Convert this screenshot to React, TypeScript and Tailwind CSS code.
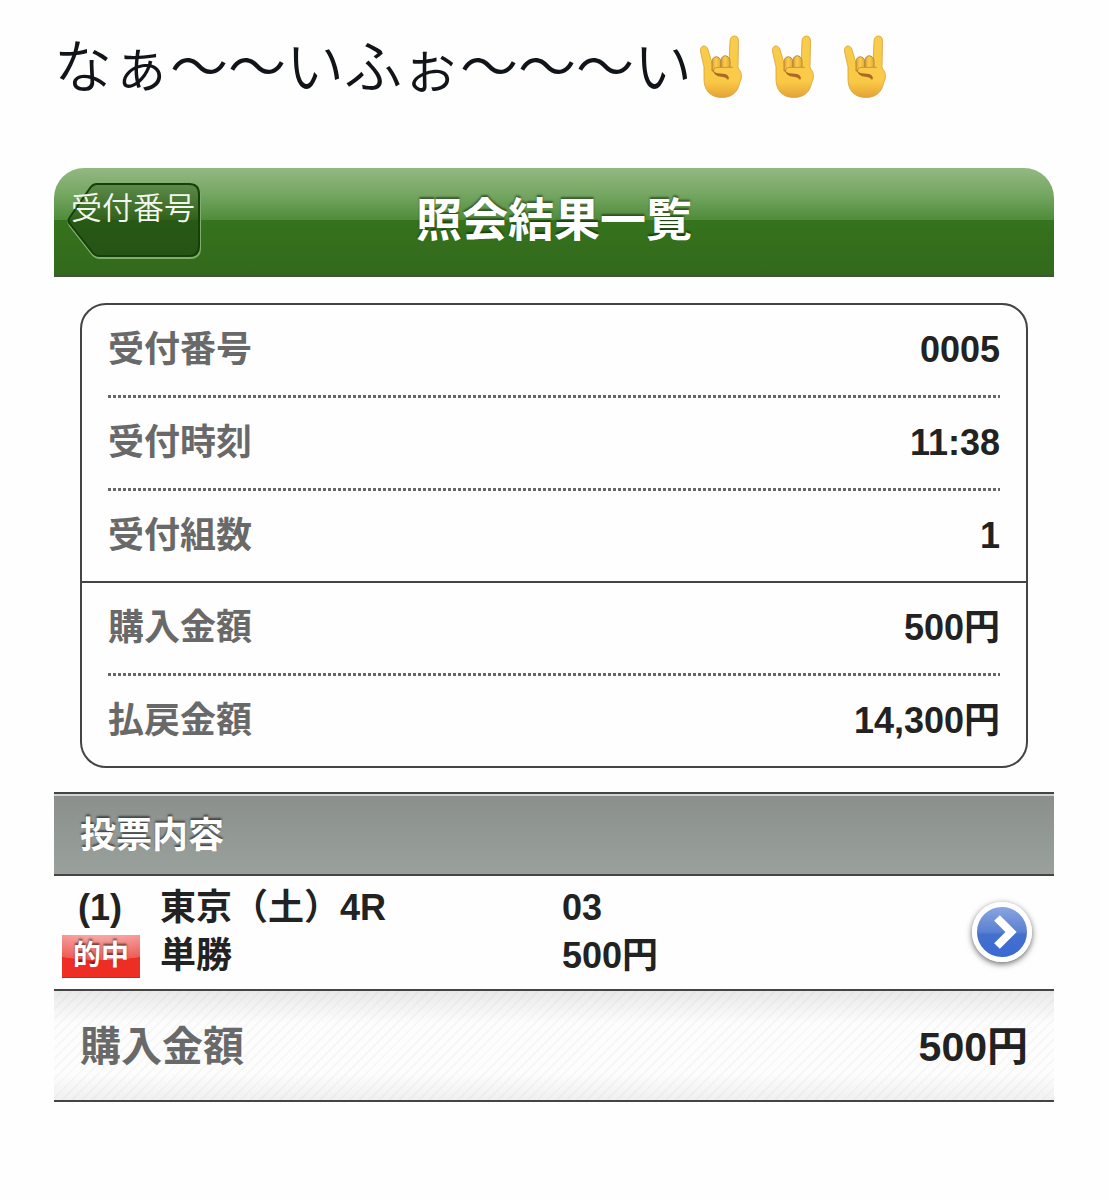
import type { ReactNode } from 'react';

const receipt = [
  { label: '受付番号', value: '0005' },
  { label: '受付時刻', value: '11:38' },
  { label: '受付組数', value: '1' },
];

const amounts = [
  { label: '購入金額', value: '500円' },
  { label: '払戻金額', value: '14,300円' },
];

function HornsHand() {
  return (
    <svg viewBox="0 0 72 68" className="h-[68px] w-[72px]" role="img" aria-label="🤘">
      <defs>
        <linearGradient id="skin" x1="0" y1="0" x2="0" y2="1">
          <stop offset="0" stopColor="#f8cd4c" />
          <stop offset="0.75" stopColor="#fac844" />
          <stop offset="1" stopColor="#e2a238" />
        </linearGradient>
        <linearGradient id="finger" x1="0" y1="0" x2="1" y2="0">
          <stop offset="0" stopColor="#dba136" />
          <stop offset="0.45" stopColor="#fbce50" />
          <stop offset="1" stopColor="#dfa83a" />
        </linearGradient>
      </defs>
      <path
        d="M12 33L8.500 17.500C7.500 11 14.500 10 16 15.500L20.500 31L37 34L38 6.500C38.500 0.500 46.500 0.500 46.500 6.500L46 34C50 38 50.500 44 47.500 49C46 58 40 63.500 30 63.500C18 63.500 12 56 12 45Z"
        fill="url(#skin)"
        stroke="#d99f38"
        strokeWidth="0.8"
      />
      <path d="M20 37V28C20 21 28.500 21 29 28V37Z" fill="url(#finger)" stroke="#b9822a" strokeWidth="0.9" />
      <path d="M29 36V27C29 20 37.500 20 38 27V36Z" fill="url(#finger)" stroke="#b9822a" strokeWidth="0.9" />
      <path d="M21 36C22 42 27 42.500 31 43C34 43.500 35 44.500 36 46C38.500 43 37 39 33 37Z" fill="#ab6a20" />
      <path
        d="M22.500 38C20.500 34.500 23 33.500 27 33.500H41C47 34 49.500 39 48 44C46 49 40 49 37 46C37.500 42 35 40 31 39.700C27 39.500 24 39.500 22.500 38Z"
        fill="#fbca4a"
      />
      <path d="M22 36C22 33.500 25 33.300 27 33.300H41" fill="none" stroke="#c98f30" strokeWidth="0.9" />
    </svg>
  );
}

function BackButton({ children }: { children: ReactNode }) {
  return (
    <button type="button" className="relative mb-[2px] h-[80px] w-[136px] justify-self-start text-left">
      <svg viewBox="0 0 136 80" className="absolute inset-0 h-full w-full" aria-hidden="true">
        <defs>
          <linearGradient id="back" x1="0" y1="0" x2="0" y2="1">
            <stop offset="0" stopColor="#5d8b4b" />
            <stop offset="0.5" stopColor="#316119" />
            <stop offset="0.5" stopColor="#285914" />
            <stop offset="1" stopColor="#265315" />
          </linearGradient>
        </defs>
        <path
          d="M29 4H124Q134 4 134 14V67Q134 77 124 77H34Q29 77 26 73L4 45Q1 41 4 37L24 8Q26 4 29 4Z"
          fill="none"
          stroke="#7fae6c"
          strokeWidth="2"
        />
        <path
          d="M31 3H123Q133 3 133 13V65Q133 75 123 75H34Q29 75 26 71L4 43Q1 40 4 36L24 7Q27 3 31 3Z"
          fill="url(#back)"
          stroke="#163f0a"
          strokeWidth="2"
        />
      </svg>
      <span className="relative block pb-[24px] pl-[5px] text-[31px] leading-[50px] font-[350] whitespace-nowrap text-[#f2f7ee]">
        {children}
      </span>
    </button>
  );
}

function Row({ label, value }: { label: string; value: string }) {
  return (
    <div className="flex h-[90px] items-center justify-between">
      <dt className="text-[#696969]">{label}</dt>
      <dd className="text-[#222]">{value}</dd>
    </div>
  );
}

function Dots() {
  return (
    <div
      aria-hidden="true"
      className="h-[3px] bg-[repeating-linear-gradient(90deg,#666_0_3px,transparent_3px_5px)]"
    />
  );
}

export default function App() {
  return (
    <main className="min-h-screen bg-[#fefefe] px-[54px] pt-[32px] font-['Liberation_Sans','Noto_Sans_CJK_JP',sans-serif]">

      <p className="flex h-[72px] items-center text-[58px] leading-[72px] font-[350] whitespace-nowrap text-[#111418]">
        <span>なぁ〜〜いふぉ〜〜〜い</span>
        <HornsHand />
        <HornsHand />
        <HornsHand />
      </p>

      <header className="mt-[64px] grid h-[109px] grid-cols-[1fr_auto_1fr] items-center rounded-t-[30px] border-b-2 border-[#48513f] bg-[linear-gradient(180deg,#92b982_0%,#74a661_25%,#4f8b39_49%,#35731d_49%,#33691c_100%)] px-[12px]">
        <BackButton>受付番号</BackButton>
        <h1 className="pb-[4px] text-[46px] leading-[60px] font-bold text-white [text-shadow:0_-2px_2px_#0007]">
          照会結果一覧
        </h1>
      </header>

      <dl className="mx-[26px] mt-[26px] rounded-[26px] border-2 border-[#444] text-[36px] leading-[48px] font-bold">
        <div className="px-[26px]">
          <Row {...receipt[0]} />
          <Dots />
          <Row {...receipt[1]} />
          <Dots />
          <Row {...receipt[2]} />
        </div>
        <div className="border-t-2 border-[#444] px-[26px]">
          <Row {...amounts[0]} />
          <Dots />
          <Row {...amounts[1]} />
        </div>
      </dl>

      <section className="mt-[24px]">

        <h2 className="border-y-2 border-[#444] bg-[linear-gradient(180deg,#8a8f8b,#9aa19c)] px-[26px] pt-[18px] pb-[14px] text-[36px] leading-[48px] font-bold text-white [box-shadow:inset_0_2px_0_#d0d3d1] [text-shadow:0_-2px_2px_#0008]">
          投票内容
        </h2>

        <div className="flex items-center justify-between pt-[8px] pr-[22px] pb-[9px] pl-[8px] text-[36px] leading-[48px] font-bold text-[#222]">
          <div className="grid flex-1 grid-cols-[98px_402px_1fr] items-center">
            <span className="pl-[16px]">(1)</span>
            <span>東京（土）4R</span>
            <span>03</span>
            <span className="flex h-[43px] w-[78px] items-center justify-center border-b border-[#a33] bg-[radial-gradient(150%_120%_at_50%_-60%,#f6aaa6_50%,#ee5c57_99%,#ee2e25_100%)] text-[28px] leading-[40px] text-white [text-shadow:0_-2px_2px_#0008]">
              的中
            </span>
            <span>単勝</span>
            <span>500円</span>
          </div>
          <button
            type="button"
            aria-label="詳細"
            className="flex size-[60px] items-center justify-center rounded-full border-[5px] border-white bg-[linear-gradient(180deg,#8aa6df_0%,#5a80d2_50%,#4470cd_55%,#3a69d4_100%)] shadow-[0_2px_6px_0_#0009]"
          >
            <svg viewBox="0 0 50 50" className="size-[50px] shrink-0" fill="none" stroke="white" strokeWidth="8">
              <path d="M20 11L34 25L20 39" />
            </svg>
          </button>
        </div>

        <div className="flex h-[113px] items-center justify-between border-y-2 border-[#444] bg-[linear-gradient(180deg,#00000014,transparent_30%,transparent_75%,#0000000d),repeating-linear-gradient(135deg,#fdfdfd_0_5px,#f7f7f7_5px_7px)] px-[26px] pt-[3px] text-[41px] leading-[56px] font-bold">
          <span className="text-[#696969]">購入金額</span>
          <span className="text-[#222]">500円</span>
        </div>

      </section>

    </main>
  );
}
